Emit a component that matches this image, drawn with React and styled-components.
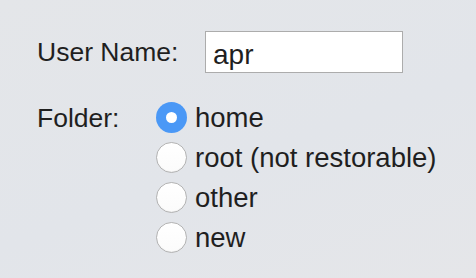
import React from 'react';
import styled, { createGlobalStyle } from 'styled-components';

const GlobalStyle = createGlobalStyle`
  html, body {
    margin: 0;
    padding: 0;
  }
  body {
    width: 476px;
    height: 278px;
    overflow: hidden;
    font-family: "Liberation Sans", Arial, sans-serif;
    color: #1f1f1f;
  }
`;

const Panel = styled.div`
  box-sizing: border-box;
  width: 476px;
  height: 278px;
  padding: 31px 0 0 37px;
  background: linear-gradient(160deg, #e4e6e9 0%, #e2e5ea 55%, #e5e6e9 100%);
  display: flex;
  flex-direction: column;
  gap: 24.5px;
`;

const Row = styled.div`
  display: flex;
  align-items: flex-start;
`;

const Label = styled.div`
  width: ${(p) => p.width}px;
  flex: none;
  font-size: 26.5px;
  line-height: ${(p) => p.lineHeight}px;
  white-space: nowrap;
`;

const TextField = styled.input`
  box-sizing: border-box;
  width: 198px;
  height: 42px;
  margin: 0;
  padding: 5px 7px 0;
  border: 1px solid #acacac;
  background: #fff;
  font-family: "Liberation Sans", Arial, sans-serif;
  font-size: 28px;
  color: #1f1f1f;
  outline: none;
`;

const RadioGroup = styled.div`
  display: flex;
  flex-direction: column;
`;

const Option = styled.label`
  display: flex;
  align-items: center;
  gap: 8px;
  height: 40px;
  font-size: 27.5px;
  white-space: nowrap;
`;

const Circle = styled.span`
  box-sizing: border-box;
  width: 31px;
  height: 31px;
  flex: none;
  border-radius: 50%;
  display: flex;
  align-items: center;
  justify-content: center;
  background: ${(p) => (p.checked ? '#4a98f6' : 'linear-gradient(#ffffff, #fbfbfb)')};
  border: ${(p) => (p.checked ? 'none' : '1px solid #b3b3b3')};
  box-shadow: ${(p) => (p.checked ? 'none' : 'inset 0 -1px 0 rgba(0,0,0,0.04)')};
`;

const Dot = styled.span`
  width: 11px;
  height: 11px;
  border-radius: 50%;
  background: #fff;
`;

const folders = ['home', 'root (not restorable)', 'other', 'new'];

export default function App() {
  const selected = 'home';
  return (
    <>
      <GlobalStyle />
      <Panel>
        <Row>
          <Label width={168} lineHeight={42}>User Name:</Label>
          <TextField type="text" value="apr" readOnly />
        </Row>
        <Row>
          <Label width={119} lineHeight={40}>Folder:</Label>
          <RadioGroup>
            {folders.map((f) => (
              <Option key={f}>
                <Circle checked={f === selected}>{f === selected && <Dot />}</Circle>
                {f}
              </Option>
            ))}
          </RadioGroup>
        </Row>
      </Panel>
    </>
  );
}
